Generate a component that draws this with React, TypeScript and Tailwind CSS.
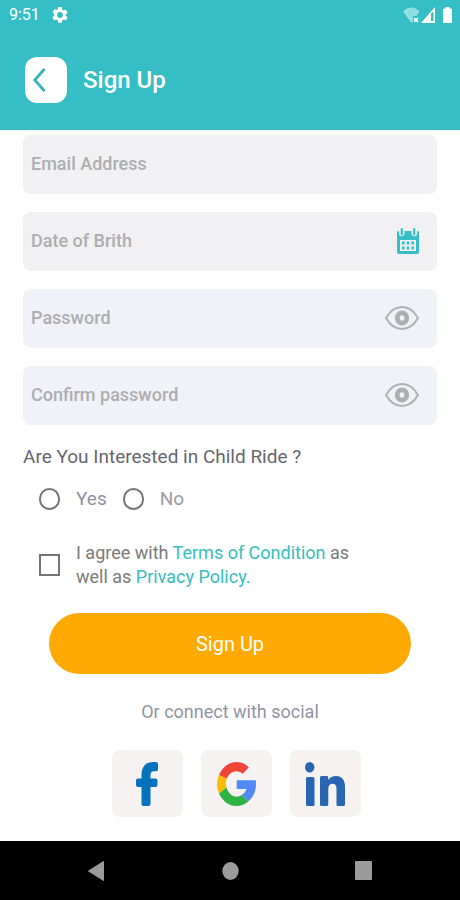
import React from 'react';

interface FieldProps {
  id: string;
  label: string;
  type?: string;
  tint: string;
  children?: React.ReactNode;
}

const Field: React.FC<FieldProps> = ({ id, label, type = 'text', tint, children }) => (
  <div className={`flex h-[59px] items-center rounded-lg pb-0.5 pl-2 pr-[18px] ${tint}`}>
    <input
      id={id}
      type={type}
      aria-label={label}
      placeholder={label}
      className="min-w-0 flex-1 bg-transparent text-lg font-medium text-[#5f606c] outline-none placeholder:text-[#adadb1]"
    />
    {children}
  </div>
);

const EyeIcon = () => (
  <svg viewBox="0 0 34 24" className="h-6 w-[34px]" fill="none">
    <path d="M1 12C5 5 10.500 1 17 1s12 4 16 11c-4 7-9.500 11-16 11S5 19 1 12Z" stroke="#b0b0b4" strokeWidth="2" strokeLinejoin="round" />
    <ellipse cx="17" cy="12" rx="4.700" ry="5.200" stroke="#aeaeb2" strokeWidth="4.800" />
  </svg>
);

const CalendarIcon = () => (
  <svg viewBox="0 0 22 26" className="h-[26px] w-[22px]">
    <path fill="#36bec7" fillRule="evenodd" d="M1.500 3H2v2.500a2.700 2.700 0 0 0 5.400 0V3h7.200v2.500a2.700 2.700 0 0 0 5.400 0V3h.5A1.500 1.500 0 0 1 22 4.500V24a2 2 0 0 1-2 2H2a2 2 0 0 1-2-2V4.500A1.500 1.500 0 0 1 1.500 3ZM3 12v11h16V12Z" />
    <rect x="3.700" y="0" width="2.200" height="7.500" rx="1.100" fill="#36bec7" />
    <rect x="16.100" y="0" width="2.200" height="7.500" rx="1.100" fill="#36bec7" />
    <path fill="#36bec7" d="M5 13.500h2.600v3H5zM9.700 13.500h2.600v3H9.700zM14.400 13.500H17v3h-2.600zM5 18.500h2.600v3H5zM9.700 18.500h2.600v3H9.700zM14.400 18.500H17v3h-2.600z" />
  </svg>
);

const FacebookLogo = () => (
  <svg viewBox="0 0 22 44" className="h-11 w-[22px]">
    <path fill="#0572bd" d="M5.500 43V25H2q-2 0-2-2v-4.500q0-2 2-2h3.500V13C5.500 4.500 10 0 17 0h3q2 0 2 2v5.500q0 1.800-2 1.800h-2c-2.600 0-3.500 1.300-3.500 4v3.200h5q2 0 2 2V23q0 2-2 2h-5v17q0 2-2 2h-5q-2 0-2-2Z" />
  </svg>
);

const GoogleLogo = () => (
  <svg viewBox="0 0 40 44" className="h-11 w-10">
    <path fill="#f04438" d="M3 13C6.500 5 13 0 20.500 0c4.800 0 9 1.900 12.300 5.200l-6 6.600C25 10 23 9.200 20.500 9.200c-4.500 0-8.200 3-9.700 7.600Z" />
    <path fill="#fbbb06" d="M3 13a22.500 22.500 0 0 0 0 18.500l7.500-6.300a11 11 0 0 1 .3-8.400Z" />
    <path fill="#2fb344" d="M3 31.500C6.500 39.200 13 44 20.500 44c4.700 0 8.900-1.500 12-4.700l-6.800-6.200c-1.500 1.100-3.300 1.700-5.200 1.700-4.700 0-8.500-4-9.900-9.200Z" />
    <path fill="#5189f5" d="M20.700 18.200h19c1.200 8.500-1.200 16.200-7.200 21.100l-6.800-6.200c2.400-1.400 4.100-3.400 4.700-6H20.700Z" />
  </svg>
);

const LinkedinLogo = () => (
  <svg viewBox="0 0 40 44" className="h-11 w-10" fill="#2866b1">
    <ellipse cx="4.700" cy="5.200" rx="4.700" ry="5.200" />
    <rect x="1" y="15" width="8.500" height="29" rx="1.500" />
    <path d="M16.500 14h5.500q1.200 0 1.200 1.200V18C25 15.300 27.500 14 31 14c6 0 9 4.200 9 11v17.500q0 1.500-1.500 1.500H33q-1.500 0-1.500-1.500V27c0-3.500-1.300-5.200-3.800-5.200-2.800 0-4.400 1.900-4.400 5.200v15.500q0 1.500-1.500 1.500h-5.300Q15 44 15 42.500v-27q0-1.500 1.500-1.500Z" />
  </svg>
);

const socials = [
  { name: 'Facebook', Logo: FacebookLogo },
  { name: 'Google', Logo: GoogleLogo },
  { name: 'LinkedIn', Logo: LinkedinLogo },
];

const StatusBar = () => (
  <div className="flex h-[30px] items-center pl-[9px] pr-2 text-white">
    <span className="text-base">9:51</span>
    <svg viewBox="2 2 20 20" className="ml-3 h-4 w-4" fill="currentColor">
      <path d="M19.140 12.940c.04-.3.06-.61.06-.94s-.02-.64-.07-.94l2.030-1.580a.49.49 0 0 0 .12-.61l-1.920-3.320a.49.49 0 0 0-.59-.22l-2.390.96a7 7 0 0 0-1.620-.94l-.36-2.540A.48.48 0 0 0 13.920 2h-3.840a.48.48 0 0 0-.47.41l-.36 2.540a7.400 7.400 0 0 0-1.620.94l-2.390-.96a.48.48 0 0 0-.59.22L2.740 8.470a.47.47 0 0 0 .12.61l2.030 1.580a6 6 0 0 0 0 2.280l-2.030 1.580a.49.49 0 0 0-.12.610l1.920 3.320c.12.22.37.29.59.22l2.390-.96c.5.38 1.030.7 1.620.94l.36 2.540c.05.24.24.41.48.41h3.840c.24 0 .44-.17.47-.41l.36-2.540a7 7 0 0 0 1.620-.94l2.390.96c.22.08.47 0 .59-.22l1.920-3.320a.47.47 0 0 0-.12-.610ZM12 15.600a3.600 3.600 0 1 1 0-7.200 3.600 3.600 0 0 1 0 7.200Z" />
    </svg>
    <div className="ml-auto flex items-center">
      <svg viewBox="0 0 17 16" className="h-4 w-[17px]">
        <path d="M0 4.500C5-1 11.500-1 16.500 4.500L13.500 9H10v5.500L8.300 16Z" fill="#8ce0e3" />
        <path d="m11 11 4 4m0-4-4 4" stroke="#fff" strokeWidth="1.600" />
      </svg>
      <svg viewBox="0 0 14 16" className="ml-px h-4 w-3.5">
        <path fill="#fff" fillRule="evenodd" d="M14 0v16H0ZM10 6.500V14h2.500V4.500Z" />
      </svg>
      <svg viewBox="0 0 9 16" className="ml-2 h-4 w-[9px]" fill="#fff">
        <path d="M2.500 0h4v1.500H8q1 0 1 1V15q0 1-1 1H1q-1 0-1-1V2.500q0-1 1-1h1.500Z" />
      </svg>
    </div>
  </div>
);

const App: React.FC = () => {
  return (
    <div className="flex min-h-screen flex-col bg-white font-['Roboto',sans-serif]">
      <header className="bg-[#36bec7] pb-[27px]">
        <StatusBar />
        <div className="mt-[27px] flex items-center gap-4 pl-[25px]">
          <button type="button" aria-label="Back" className="flex h-[46px] w-[42px] items-center rounded-xl bg-white pl-2">
            <svg viewBox="0 0 13 24" className="h-6 w-[13px]" fill="none">
              <path d="M11.500 1 1.800 12l9.700 11" stroke="#36b4bd" strokeWidth="2.800" />
            </svg>
          </button>
          <h1 className="text-2xl font-medium text-white">Sign Up</h1>
        </div>
      </header>

      <form className="px-[23px] pt-[5px]" onSubmit={e => e.preventDefault()}>
        <div className="flex flex-col gap-[18px]">
          <Field id="email" label="Email Address" type="email" tint="bg-[#f1f1f3]" />
          <Field id="dob" label="Date of Brith" tint="bg-[#f1f1f3]">
            <button type="button" aria-label="Pick a date"><CalendarIcon /></button>
          </Field>
          <Field id="password" label="Password" type="password" tint="bg-[#f1f2f7]">
            <button type="button" aria-label="Show password"><EyeIcon /></button>
          </Field>
          <Field id="confirm" label="Confirm password" type="password" tint="bg-[#f1f2f7]">
            <button type="button" aria-label="Show confirmation"><EyeIcon /></button>
          </Field>
        </div>

        <fieldset>
          <legend className="pt-[18px] text-[19px] leading-7 text-[#66666f]">Are You Interested in Child Ride ?</legend>
          <div className="flex gap-4 pl-4 pt-3.5 text-[19px] leading-7">
            <label className="flex items-center gap-4 text-[#8d8fa1]">
              <input type="radio" name="childRide" className="h-[22px] w-[21px] appearance-none rounded-full border-2 border-[#757575] checked:bg-[#36bec7]" />
              Yes
            </label>
            <label className="flex items-center gap-4 text-[#9c9ca0]">
              <input type="radio" name="childRide" className="h-[22px] w-[21px] appearance-none rounded-full border-2 border-[#757575] checked:bg-[#36bec7]" />
              No
            </label>
          </div>
        </fieldset>

        <div className="flex items-center gap-4 pl-4 pt-7">
          <input id="agree" type="checkbox" className="h-[22px] w-[21px] shrink-0 appearance-none border-2 border-[#757575] checked:bg-[#36bec7]" />
          <label htmlFor="agree" className="max-w-[290px] text-lg leading-6 text-[#7b7b7b]">
            I agree with <a href="#terms" className="text-[#36bec0]">Terms of Condition</a> as well as{' '}
            <a href="#privacy" className="text-[#36bec0]">Privacy Policy.</a>
          </label>
        </div>

        <div className="px-[26px] pt-6">
          <button type="submit" className="h-[61px] w-full rounded-full bg-[#ffaa02] text-xl text-white">
            Sign Up
          </button>
        </div>
      </form>

      <p className="pt-6 text-center text-lg text-[#9294a4]">Or connect with social</p>
      <div className="flex justify-center gap-[18px] pb-6 pl-3 pt-6">
        {socials.map(({ name, Logo }) => (
          <button key={name} type="button" aria-label={name} className="flex h-[67px] w-[71px] items-center justify-center rounded-lg bg-[#f6f2f2]">
            <Logo />
          </button>
        ))}
      </div>

      <nav className="mt-auto flex h-[59px] items-center justify-between bg-black px-[88px]">
        <button type="button" aria-label="Back">
          <svg viewBox="0 0 17 20" className="h-5 w-[17px]"><path d="M15.500.5v19L.5 10Z" fill="#9b9b9b" stroke="#9b9b9b" strokeLinejoin="round" /></svg>
        </button>
        <button type="button" aria-label="Home">
          <svg viewBox="0 0 17 18" className="h-[18px] w-[17px]"><ellipse cx="8.500" cy="9" rx="8.200" ry="9" fill="#9b9b9b" /></svg>
        </button>
        <button type="button" aria-label="Recent apps">
          <svg viewBox="0 0 17 19" className="h-[19px] w-[17px]"><rect width="17" height="19" rx="1" fill="#9b9b9b" /></svg>
        </button>
      </nav>
    </div>
  );
};

export default App;
